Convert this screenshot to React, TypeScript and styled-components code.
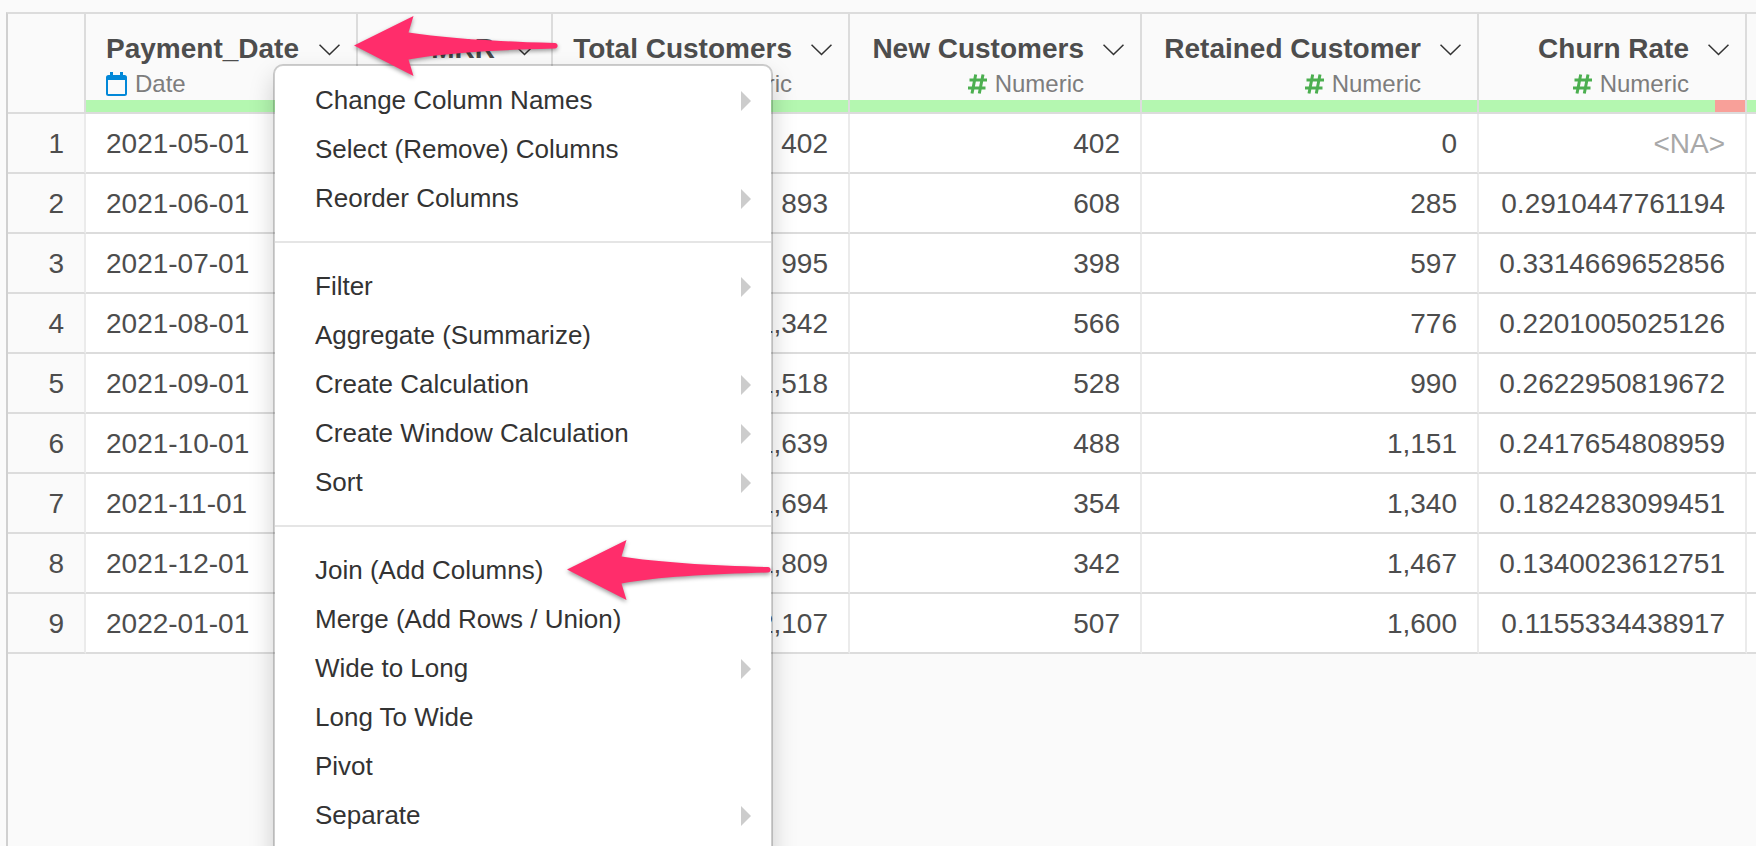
import React from "react";
import styled, { createGlobalStyle } from "styled-components";

const GlobalStyle = createGlobalStyle`
  *, *::before, *::after { box-sizing: border-box; }
  body {
    margin: 0;
    background: #fafafa;
    color: #4d4d4d;
    font-family: "Liberation Sans", Arial, Helvetica, sans-serif;
    font-size: 28px;
  }
  button { font: inherit; color: inherit; background: none; border: 0; padding: 0; cursor: pointer; }
`;

const Page = styled.main`
  position: relative;
  height: 100vh;
  padding: 12px 0 0 6px;
  overflow: hidden;
`;

const Grid = styled.div`
  height: 100%;
  border-top: 2px solid #dcdcdc;
  border-left: 2px solid #d0d0d0;
`;

const Table = styled.table`
  width: 100%;
  table-layout: fixed;
  border-collapse: separate;
  border-spacing: 0;
`;

const Col = styled.col<{ $width?: number }>`
  width: ${(p) => (p.$width ? `${p.$width}px` : "auto")};
`;

const HeadCell = styled.th`
  height: 100px;
  padding: 0;
  vertical-align: bottom;
  font-weight: normal;
  border-right: 2px solid #dcdcdc;
  border-bottom: 2px solid #dcdcdc;
  &:last-child { border-right: 0; }
`;

const HeadContent = styled.div<{ $numeric: boolean }>`
  display: flex;
  align-items: flex-start;
  justify-content: ${(p) => (p.$numeric ? "flex-end" : "space-between")};
  gap: 19px;
  padding: 0 16px 0 20px;
  text-align: ${(p) => (p.$numeric ? "right" : "left")};
  white-space: nowrap;
`;

const ColumnName = styled.div`
  font-weight: bold;
  line-height: 38px;
`;

const ColumnType = styled.div<{ $numeric: boolean }>`
  display: flex;
  align-items: center;
  justify-content: ${(p) => (p.$numeric ? "flex-end" : "flex-start")};
  gap: 8px;
  color: #7d7d7d;
  font-size: 24px;
  line-height: 32px;
`;

const MenuButton = styled.button`
  display: flex;
  align-items: center;
  height: 40px;
`;

const QualityBar = styled.div`
  display: flex;
  height: 12px;
  background: #b4f7b0;
`;

const MissingPart = styled.div`
  width: 30px;
  margin-left: auto;
  background: #f8a099;
`;

const RowNumber = styled.th`
  height: 60px;
  padding: 2px 20px 0 0;
  font-weight: normal;
  text-align: right;
  border-right: 2px solid #ebebeb;
  border-bottom: 2px solid #dcdcdc;
`;

const Cell = styled.td<{ $align?: "left" | "right"; $missing?: boolean }>`
  height: 60px;
  padding: 2px 20px 0;
  overflow: hidden;
  background: #fff;
  color: ${(p) => (p.$missing ? "#a8a8a8" : "inherit")};
  text-align: ${(p) => p.$align ?? "right"};
  white-space: nowrap;
  border-right: 2px solid #ebebeb;
  border-bottom: 2px solid #dcdcdc;
  &:last-child { padding: 0; border-right: 0; }
`;

const Menu = styled.div`
  position: absolute;
  top: 64px;
  left: 273px;
  width: 500px;
  padding: 10px 0 60px;
  color: #333;
  font-size: 26px;
  background: #fff;
  background-clip: padding-box;
  border: 2px solid rgba(0, 0, 0, 0.18);
  border-radius: 10px;
  box-shadow: 0 12px 24px rgba(0, 0, 0, 0.18);
`;

const MenuItem = styled.button`
  display: flex;
  align-items: center;
  justify-content: space-between;
  width: 100%;
  padding: 6px 20px 6px 40px;
  line-height: 37px;
  text-align: left;
`;

const Divider = styled.hr`
  height: 2px;
  margin: 18px 0 19px;
  border: 0;
  background: #e5e5e5;
`;

const ArrowMark = styled.svg<{ $left: number; $top: number }>`
  position: absolute;
  left: ${(p) => p.$left}px;
  top: ${(p) => p.$top}px;
  overflow: visible;
  pointer-events: none;
  filter: drop-shadow(0 2px 2px rgba(0, 0, 0, 0.4));
`;

const Arrow = ({ left, top }: { left: number; top: number }) => (
  <ArrowMark $left={left} $top={top} width="204" height="60" viewBox="0 0 204 60" aria-hidden="true">
    <path
      d="M0 29.5 L59.5 0 L54.5 16.5 C90 22 140 25.5 201 27 C204.500 27.500 204.500 32 201 32.500 C140 34 90 37 54.500 43.500 L59.500 60 Z"
      fill="#ff2d6b"
    />
  </ArrowMark>
);

const Chevron = () => (
  <svg width="21" height="12" viewBox="0 0 21 12" fill="none" stroke="#333" strokeWidth="1.6" aria-hidden="true">
    <path d="M0.500 0.700 L10.500 10.500 L20.500 0.700" />
  </svg>
);

const CalendarIcon = () => (
  <svg width="21" height="24" viewBox="0 0 21 24" aria-hidden="true">
    <path
      fill="#0288d8"
      fillRule="evenodd"
      d="M4 0h3v3h7V0h3v3h1.500A2.500 2.500 0 0 1 21 5.500v16A2.500 2.500 0 0 1 18.500 24h-16A2.500 2.500 0 0 1 0 21.500v-16A2.500 2.500 0 0 1 2.500 3H4zM2 8v14h17V8z"
    />
  </svg>
);

const HashIcon = () => (
  <svg width="19" height="20" viewBox="0 0 19 20" fill="none" stroke="#4caf50" strokeWidth="3" aria-hidden="true">
    <path d="M7.700 0.500 L4 19.500 M15 0.500 L11.300 19.500 M1.500 6 H19 M0 14 H17.500" />
  </svg>
);

const Triangle = () => (
  <svg width="10" height="20" viewBox="0 0 10 20" aria-hidden="true">
    <path d="M0 0 L10 10 L0 20 Z" fill="#ccc" />
  </svg>
);

type Column = { name: string; width: number; type: "Date" | "Numeric"; missing?: boolean };

const columns: Column[] = [
  { name: "Payment_Date", width: 272, type: "Date" },
  { name: "MRR", width: 195, type: "Numeric" },
  { name: "Total Customers", width: 297, type: "Numeric" },
  { name: "New Customers", width: 292, type: "Numeric" },
  { name: "Retained Customer", width: 337, type: "Numeric" },
  { name: "Churn Rate", width: 268, type: "Numeric", missing: true },
];

const rows: string[][] = [
  ["2021-05-01", "", "402", "402", "0", "<NA>"],
  ["2021-06-01", "", "893", "608", "285", "0.2910447761194"],
  ["2021-07-01", "", "995", "398", "597", "0.3314669652856"],
  ["2021-08-01", "", "1,342", "566", "776", "0.2201005025126"],
  ["2021-09-01", "", "1,518", "528", "990", "0.2622950819672"],
  ["2021-10-01", "", "1,639", "488", "1,151", "0.2417654808959"],
  ["2021-11-01", "", "1,694", "354", "1,340", "0.1824283099451"],
  ["2021-12-01", "", "1,809", "342", "1,467", "0.1340023612751"],
  ["2022-01-01", "", "2,107", "507", "1,600", "0.1155334438917"],
];

type Item = { label: string; submenu?: boolean };

const menuGroups: Item[][] = [
  [
    { label: "Change Column Names", submenu: true },
    { label: "Select (Remove) Columns" },
    { label: "Reorder Columns", submenu: true },
  ],
  [
    { label: "Filter", submenu: true },
    { label: "Aggregate (Summarize)" },
    { label: "Create Calculation", submenu: true },
    { label: "Create Window Calculation", submenu: true },
    { label: "Sort", submenu: true },
  ],
  [
    { label: "Join (Add Columns)" },
    { label: "Merge (Add Rows / Union)" },
    { label: "Wide to Long", submenu: true },
    { label: "Long To Wide" },
    { label: "Pivot" },
    { label: "Separate", submenu: true },
  ],
];

const ColumnHeader = ({ column }: { column: Column }) => {
  const numeric = column.type === "Numeric";
  return (
    <HeadCell scope="col">
      <HeadContent $numeric={numeric}>
        <div>
          <ColumnName>{column.name}</ColumnName>
          <ColumnType $numeric={numeric}>
            {numeric ? <HashIcon /> : <CalendarIcon />}
            {column.type}
          </ColumnType>
        </div>
        <MenuButton type="button" aria-label={`${column.name} column menu`}>
          <Chevron />
        </MenuButton>
      </HeadContent>
      <QualityBar>{column.missing && <MissingPart />}</QualityBar>
    </HeadCell>
  );
};

export default function App() {
  return (
    <>
      <GlobalStyle />
      <Page>
        <Grid>
          <Table>
            <colgroup>
              <Col $width={78} />
              {columns.map((c) => (
                <Col key={c.name} $width={c.width} />
              ))}
              <Col />
            </colgroup>
            <thead>
              <tr>
                <HeadCell />
                {columns.map((c) => (
                  <ColumnHeader key={c.name} column={c} />
                ))}
                <HeadCell>
                  <QualityBar />
                </HeadCell>
              </tr>
            </thead>
            <tbody>
              {rows.map((row, r) => (
                <tr key={row[0]}>
                  <RowNumber scope="row">{r + 1}</RowNumber>
                  {row.map((value, c) => (
                    <Cell key={columns[c].name} $align={c === 0 ? "left" : "right"} $missing={value === "<NA>"}>
                      {value}
                    </Cell>
                  ))}
                  <Cell />
                </tr>
              ))}
            </tbody>
          </Table>
        </Grid>
        <Menu role="menu" aria-label="Column menu">
          {menuGroups.map((group, g) => (
            <React.Fragment key={g}>
              {g > 0 && <Divider />}
              {group.map((item) => (
                <MenuItem key={item.label} type="button" role="menuitem" aria-haspopup={item.submenu}>
                  {item.label}
                  {item.submenu && <Triangle />}
                </MenuItem>
              ))}
            </React.Fragment>
          ))}
        </Menu>
        <Arrow left={354} top={16} />
        <Arrow left={567} top={540} />
      </Page>
    </>
  );
}
